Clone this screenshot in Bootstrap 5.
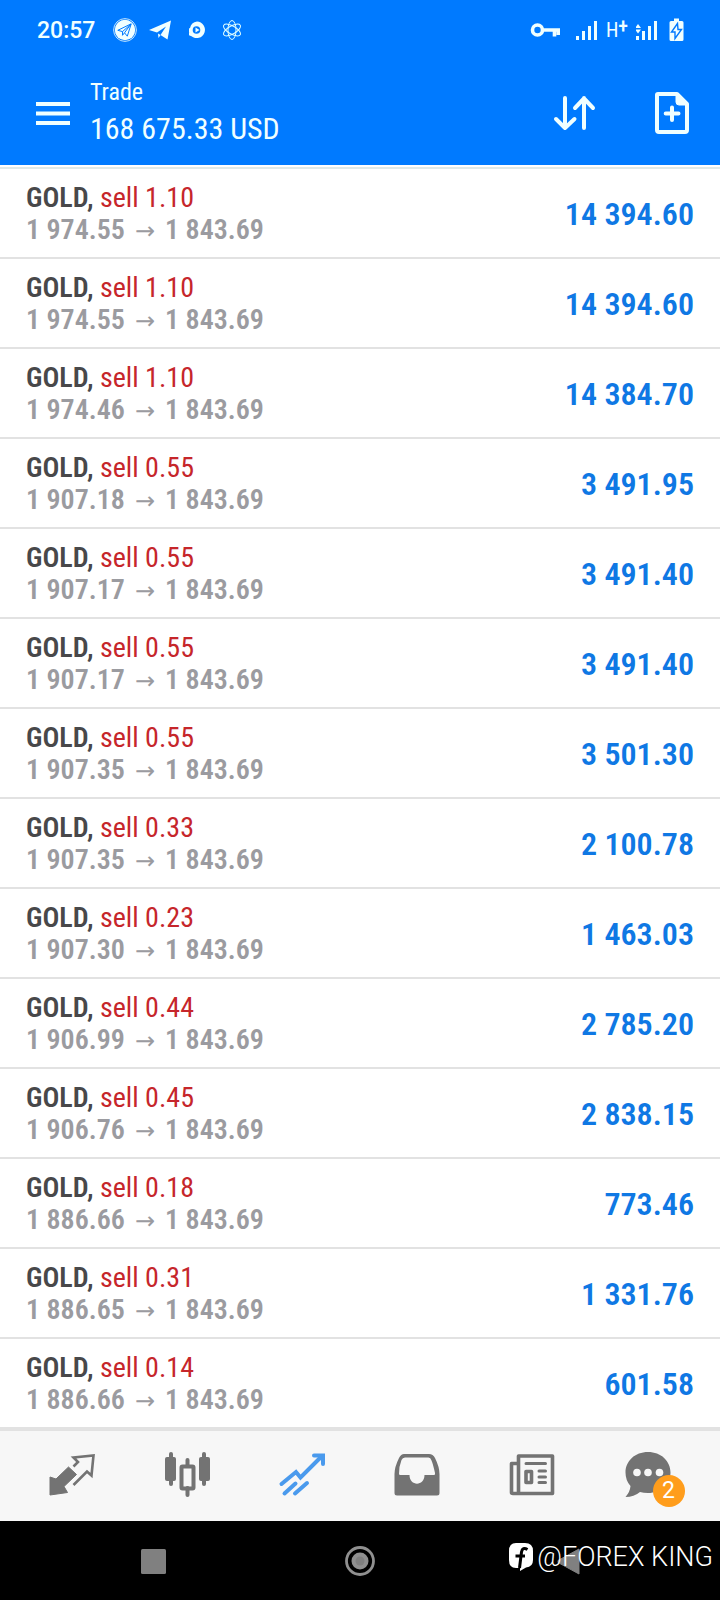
<!DOCTYPE html>
<html lang="en">
<head>
<meta charset="utf-8">
<meta name="viewport" content="width=device-width, initial-scale=1">
<title>Trade</title>
<link href="https://cdn.jsdelivr.net/npm/bootstrap@5.3.0/dist/css/bootstrap.min.css" rel="stylesheet">
<style>
  body { font-family: "Roboto Condensed", Roboto, sans-serif; }
  .top-area { background: #007aff; color: #f0ffff; }
  .status-bar { height: 60px; padding: 0 34px 0 37px; font: 500 23px/28px Roboto, sans-serif; }
  .status-bar .clock { margin-right: 18px; padding-top: 2px; }
  .net-type { font: 400 20px/20px "Roboto Condensed", Roboto, sans-serif; }
  .net-type sup { font-size: 20px; font-weight: 500; line-height: 0; top: -4px; }
  .app-bar { height: 105px; padding: 0 28px 0 32px; gap: 48px; }
  .acct { gap: 18px; }
  .acct-label { font-size: 24px; line-height: 30px; margin: 0; }
  .acct-value { font-size: 30px; line-height: 40px; margin: 0; padding-top: 2px; }
  .trades { border-top: 2px solid #dfe9e9; margin-top: 2px; }
  .trades .list-group-item { height: 90px; padding: 2px 26px 0; border-color: #e2e2e2; border-width: 0 0 2px; }
  .trades .list-group-item:last-child { height: 88px; border: 0; }
  .deal { font-size: 28px; line-height: 32px; }
  .symbol { font-weight: 600; color: #48484a; }
  .side { color: #c6262b; }
  .prices { font-weight: 600; color: #9b9ba0; }
  .arrow { font: 400 24px/20px "DejaVu Sans", sans-serif; margin: 0 10px; }
  .profit { font-size: 32px; line-height: 40px; font-weight: 600; color: #0f78e4; }
  .tab-bar { background: #f7f7f7; border-top: 4px solid #e2e2e2; height: 94px; padding: 0 16px 0 14px; color: #737373; }
  .tab-bar a { flex: 1 1 0; }
  .unread { left: 30px; top: 23px; width: 32px; height: 32px; background: #ff9d1c; color: #fff; font: 400 23px/32px Roboto, sans-serif; }
  .system-bar { background: #000; height: 79px; padding: 0 48px; color: #808080; }
  .system-bar button { flex: 1 1 0; }
  .credit { right: 7px; top: 19px; color: #fff; font: 300 27px/34px Roboto, sans-serif; pointer-events: none; }
  svg { display: block; flex: none; }
</style>
</head>
<body class="min-vh-100 d-flex flex-column bg-white">

<header class="top-area">
  <div class="status-bar d-flex align-items-center">
    <span class="clock">20:57</span>
    <svg width="24" height="24" viewBox="0 0 24 24"><circle cx="12" cy="12" r="10.2" fill="#f0ffff"/><circle cx="12" cy="12" r="11.4" fill="none" stroke="#f0ffff" stroke-width=".8"/><path d="M4.800 12.300 18.200 5.800 14.300 18.200 11.500 14.800 9.500 17.300V13.600Z M9.500 13.600 18 6 11.500 14.800" fill="none" stroke="#007aff" stroke-width="1"/></svg>
    <svg class="ms-2" width="28" height="24" viewBox="-4 0 28 24"><path d="M0 12 22 2.500 18.500 21.500 11.500 17 17 8.500 8 14.500Z M9 15.500 11.500 17 9.500 20Z" fill="#f0ffff"/></svg>
    <svg class="ms-3" width="18" height="24" viewBox="2 0 18 24"><path d="M11 3.500a8.300 8.300 0 1 1-5.500 14.800L2 17l1.200-2.500L1.500 11 4 10A8.300 8.300 0 0 1 11 3.500Z" fill="#f0ffff" transform="translate(-1 0)"/><circle cx="9.500" cy="12" r="3.800" fill="#007aff"/><path d="M8.500 9.500 12.500 12 8.500 14.500Z" fill="#f0ffff"/></svg>
    <svg class="ms-3" width="20" height="24" viewBox="0 0 20 24" fill="none" stroke="#e0ffff" stroke-width="1"><ellipse cx="9" cy="12" rx="4" ry="9.500"/><ellipse cx="9" cy="12" rx="4" ry="9.500" transform="rotate(60 9 12)"/><ellipse cx="9" cy="12" rx="4" ry="9.500" transform="rotate(120 9 12)"/></svg>

    <svg class="ms-auto" width="30" height="20" viewBox="0 0 30 20" fill="none" stroke="#f0ffff"><circle cx="7.500" cy="10" r="5" stroke-width="3.600"/><path d="M12 10H30M24.500 10V16.500M28.300 10V15" stroke-width="3.600"/></svg>
    <svg class="ms-3" width="22" height="20" viewBox="0 0 22 20" fill="#f0ffff"><path d="M0 16h3v4H0zM6 11h3v9H6zM12 6h3v14h-3zM18 1h3v19h-3z"/></svg>
    <span class="net-type ms-2">H<sup>+</sup></span>
    <svg class="ms-2" width="22" height="20" viewBox="0 0 22 20" fill="#f0ffff"><path d="M0 16h3v4H0zM6 11h3v9H6zM12 6h3v14h-3zM18 1h3v19h-3zM2 4 5 8H-1ZM-1 9.500H5L2 13.500Z"/></svg>
    <svg class="ms-2" width="20" height="24" viewBox="0 0 20 24"><path d="M8 .500h5V3h3q1.500 0 1.500 1.500v17q0 1.500-1.500 1.500H5q-1.500 0-1.500-1.500V4.500Q3.500 3 5 3h3Z" fill="#f0ffff"/><path d="M11.500 5.500 5.500 14H9V20.500L15.500 11.500H12Z" fill="#f0ffff" stroke="#007aff" stroke-width="1.400"/></svg>
  </div>

  <div class="app-bar d-flex align-items-center">
    <div class="acct d-flex align-items-center flex-grow-1">
      <button class="btn p-0 border-0" type="button" aria-label="Menu">
        <svg width="40" height="40" viewBox="0 0 40 40" stroke="#f0ffff" stroke-width="4"><path d="M4 11H38M4 20.500H38M4 30H38"/></svg>
      </button>
      <div>
        <h1 class="acct-label fw-normal">Trade</h1>
        <p class="acct-value">168 675.33 USD</p>
      </div>
    </div>
    <button class="btn p-0 border-0" type="button" aria-label="Sort">
      <svg width="52" height="48" viewBox="0 0 52 48" fill="none" stroke="#f0ffff" stroke-width="4" stroke-linecap="round" stroke-linejoin="round"><path d="M15 9V39M6 30 15 39 24.500 30M34 39V9M25 19 34 9.500 43 19"/></svg>
    </button>
    <button class="btn p-0 border-0" type="button" aria-label="New order">
      <svg width="42" height="48" viewBox="0 0 42 48" fill="none" stroke="#f0ffff" stroke-width="4" stroke-linecap="round" stroke-linejoin="round"><path d="M8 5H27L37 15V41Q37 43 35 43H9Q7 43 7 41V6Q7 5 8 5Z"/><path d="M26 5V13Q26 16 29 16H37Z" fill="#f0ffff" stroke-width="1"/><path d="M22 18.500V31M15.700 24.500H28.500"/></svg>
    </button>
  </div>
</header>

<main class="flex-grow-1">
  <ul class="trades list-group list-group-flush">
    <li class="list-group-item d-flex justify-content-between align-items-center"><div class="deal"><div><span class="symbol">GOLD,</span> <span class="side">sell 1.10</span></div><div class="prices">1 974.55<span class="arrow">→</span>1 843.69</div></div><span class="profit">14 394.60</span></li>
    <li class="list-group-item d-flex justify-content-between align-items-center"><div class="deal"><div><span class="symbol">GOLD,</span> <span class="side">sell 1.10</span></div><div class="prices">1 974.55<span class="arrow">→</span>1 843.69</div></div><span class="profit">14 394.60</span></li>
    <li class="list-group-item d-flex justify-content-between align-items-center"><div class="deal"><div><span class="symbol">GOLD,</span> <span class="side">sell 1.10</span></div><div class="prices">1 974.46<span class="arrow">→</span>1 843.69</div></div><span class="profit">14 384.70</span></li>
    <li class="list-group-item d-flex justify-content-between align-items-center"><div class="deal"><div><span class="symbol">GOLD,</span> <span class="side">sell 0.55</span></div><div class="prices">1 907.18<span class="arrow">→</span>1 843.69</div></div><span class="profit">3 491.95</span></li>
    <li class="list-group-item d-flex justify-content-between align-items-center"><div class="deal"><div><span class="symbol">GOLD,</span> <span class="side">sell 0.55</span></div><div class="prices">1 907.17<span class="arrow">→</span>1 843.69</div></div><span class="profit">3 491.40</span></li>
    <li class="list-group-item d-flex justify-content-between align-items-center"><div class="deal"><div><span class="symbol">GOLD,</span> <span class="side">sell 0.55</span></div><div class="prices">1 907.17<span class="arrow">→</span>1 843.69</div></div><span class="profit">3 491.40</span></li>
    <li class="list-group-item d-flex justify-content-between align-items-center"><div class="deal"><div><span class="symbol">GOLD,</span> <span class="side">sell 0.55</span></div><div class="prices">1 907.35<span class="arrow">→</span>1 843.69</div></div><span class="profit">3 501.30</span></li>
    <li class="list-group-item d-flex justify-content-between align-items-center"><div class="deal"><div><span class="symbol">GOLD,</span> <span class="side">sell 0.33</span></div><div class="prices">1 907.35<span class="arrow">→</span>1 843.69</div></div><span class="profit">2 100.78</span></li>
    <li class="list-group-item d-flex justify-content-between align-items-center"><div class="deal"><div><span class="symbol">GOLD,</span> <span class="side">sell 0.23</span></div><div class="prices">1 907.30<span class="arrow">→</span>1 843.69</div></div><span class="profit">1 463.03</span></li>
    <li class="list-group-item d-flex justify-content-between align-items-center"><div class="deal"><div><span class="symbol">GOLD,</span> <span class="side">sell 0.44</span></div><div class="prices">1 906.99<span class="arrow">→</span>1 843.69</div></div><span class="profit">2 785.20</span></li>
    <li class="list-group-item d-flex justify-content-between align-items-center"><div class="deal"><div><span class="symbol">GOLD,</span> <span class="side">sell 0.45</span></div><div class="prices">1 906.76<span class="arrow">→</span>1 843.69</div></div><span class="profit">2 838.15</span></li>
    <li class="list-group-item d-flex justify-content-between align-items-center"><div class="deal"><div><span class="symbol">GOLD,</span> <span class="side">sell 0.18</span></div><div class="prices">1 886.66<span class="arrow">→</span>1 843.69</div></div><span class="profit">773.46</span></li>
    <li class="list-group-item d-flex justify-content-between align-items-center"><div class="deal"><div><span class="symbol">GOLD,</span> <span class="side">sell 0.31</span></div><div class="prices">1 886.65<span class="arrow">→</span>1 843.69</div></div><span class="profit">1 331.76</span></li>
    <li class="list-group-item d-flex justify-content-between align-items-center"><div class="deal"><div><span class="symbol">GOLD,</span> <span class="side">sell 0.14</span></div><div class="prices">1 886.66<span class="arrow">→</span>1 843.69</div></div><span class="profit">601.58</span></li>
  </ul>
</main>

<nav class="tab-bar d-flex align-items-center" aria-label="Sections">
  <a class="d-flex justify-content-center text-reset" href="#quotes" aria-label="Quotes">
    <svg width="48" height="48" viewBox="0 0 48 48"><path d="M20.500 15 28.500 22.500 16 34.500 19.500 40.500 2 43V25L8 27Z" fill="currentColor" stroke="currentColor" stroke-linejoin="round"/><path d="M25.500 14.500 30 10 25.500 5.500 45.500 3.500 43.500 23.500 39 19.500 25.500 33" fill="none" stroke="currentColor" stroke-width="2.600"/></svg>
  </a>
  <a class="d-flex justify-content-center text-reset" href="#charts" aria-label="Charts">
    <svg width="48" height="48" viewBox="0 0 48 48" fill="currentColor"><rect x="2" y="5" width="11" height="24" rx="2"/><rect x="6" y="0" width="4" height="34" rx="2"/><rect x="36" y="5" width="11" height="24" rx="2"/><rect x="39" y="0" width="4" height="34" rx="2"/><rect x="22.500" y="6" width="4" height="10" rx="2"/><rect x="22.500" y="34" width="4" height="11" rx="2"/><rect x="18.500" y="14.500" width="12" height="22" rx="1" fill="none" stroke="currentColor" stroke-width="4"/></svg>
  </a>
  <a class="d-flex justify-content-center" href="#trade" aria-label="Trade" aria-current="page">
    <svg width="48" height="48" viewBox="0 0 48 48" fill="none" stroke="#4a9aed" stroke-width="4" stroke-linecap="round"><path d="M3.500 32 18 20 22.500 25.500 44 4"/><path d="M36 3.500H45V12"/><path d="M40 4H45V9Z" fill="#4a9aed" stroke-width="2"/><path d="M6.500 41.500 17.500 31.500M17 41.500 29 31"/></svg>
  </a>
  <a class="d-flex justify-content-center text-reset" href="#history" aria-label="History">
    <svg width="48" height="48" viewBox="0 0 48 48"><path fill="currentColor" fill-rule="evenodd" d="M11 2H36Q40 2 42 6 46.500 15 46.500 22V41Q46.500 43.500 44 43.500H4Q1.500 43.500 1.500 41V22Q1.500 15 6 6 8 2 11 2ZM12 5.500Q9.500 5.500 8.500 8 6 14 6 22 6 23 7.500 23H16.500C16.500 34.500 31.500 34.500 31.500 23H41Q42.500 23 42 21 40 12 38.500 8.500 37.500 5.500 35.500 5.500Z"/></svg>
  </a>
  <a class="d-flex justify-content-center text-reset" href="#news" aria-label="News">
    <svg width="48" height="48" viewBox="0 0 48 48" fill="none" stroke="currentColor" stroke-width="4" stroke-linejoin="round"><path d="M10.500 4H44.500V41.500H10.500ZM10.500 11.500H3.500V40.500Q3.500 41.500 5 41.500H10.500" stroke-width="3.600"/><path d="M18 11.500H37.500M31 19H37.500M31 25H37.500M31 30.500H37.500" stroke-width="3" stroke-linecap="round"/><rect x="18" y="19.500" width="5.500" height="11" stroke-width="3.600"/></svg>
  </a>
  <a class="d-flex justify-content-center text-reset text-decoration-none" href="#messages" aria-label="Messages">
    <span class="position-relative">
      <svg width="48" height="48" viewBox="0 0 48 48"><path fill="currentColor" d="M25 0C38 0 47.500 9 47.500 20.500S38 41 25 41Q20.500 41 17 40 11 45 2.500 45 7 40 7.500 34 2.500 28.500 2.500 20.500C2.500 9 12 0 25 0Z"/><g fill="#f7f7f7"><circle cx="14" cy="20.500" r="3.800"/><circle cx="25" cy="20.500" r="3.800"/><circle cx="36.500" cy="20.500" r="3.800"/></g></svg>
      <span class="unread position-absolute rounded-circle text-center">2</span>
    </span>
  </a>
</nav>

<footer class="system-bar position-relative d-flex align-items-center">
  <button class="btn p-0 border-0 d-flex justify-content-center" type="button" aria-label="Recent apps"><svg width="30" height="30" viewBox="0 0 30 30"><rect x="4" y="3" width="25" height="25" rx="1.500" fill="#808080"/></svg></button>
  <button class="btn p-0 border-0 d-flex justify-content-center" type="button" aria-label="Home"><svg width="32" height="32" viewBox="0 0 32 32"><circle cx="16" cy="16" r="13.500" fill="none" stroke="#909090" stroke-width="2.800"/><circle cx="16" cy="16" r="8.500" fill="#909090"/><circle cx="16" cy="16" r="4.500" fill="#808080"/></svg></button>
  <button class="btn p-0 border-0 d-flex justify-content-center" type="button" aria-label="Back"><svg width="30" height="30" viewBox="0 0 30 30"><path d="M26 3V28L5 16.500V14.500Z" fill="#808080" stroke="#808080" stroke-linejoin="round"/></svg></button>
  <div class="credit position-absolute d-flex align-items-center">
    <svg width="29" height="32" viewBox="0 0 29 32"><path fill="#fff" d="M8 2H17Q25 2 25 10V19Q25 26 18 26.500L12 30V27H8Q1 27 1 19V10Q1 2 8 2Z"/><path d="M19.500 8.500Q14.500 5.500 13.500 11L11.500 27M7.500 15H17" fill="none" stroke="#000" stroke-width="3"/></svg>
    <span>@FOREX KING</span>
  </div>
</footer>

<script src="https://cdn.jsdelivr.net/npm/bootstrap@5.3.0/dist/js/bootstrap.bundle.min.js"></script>
</body>
</html>
